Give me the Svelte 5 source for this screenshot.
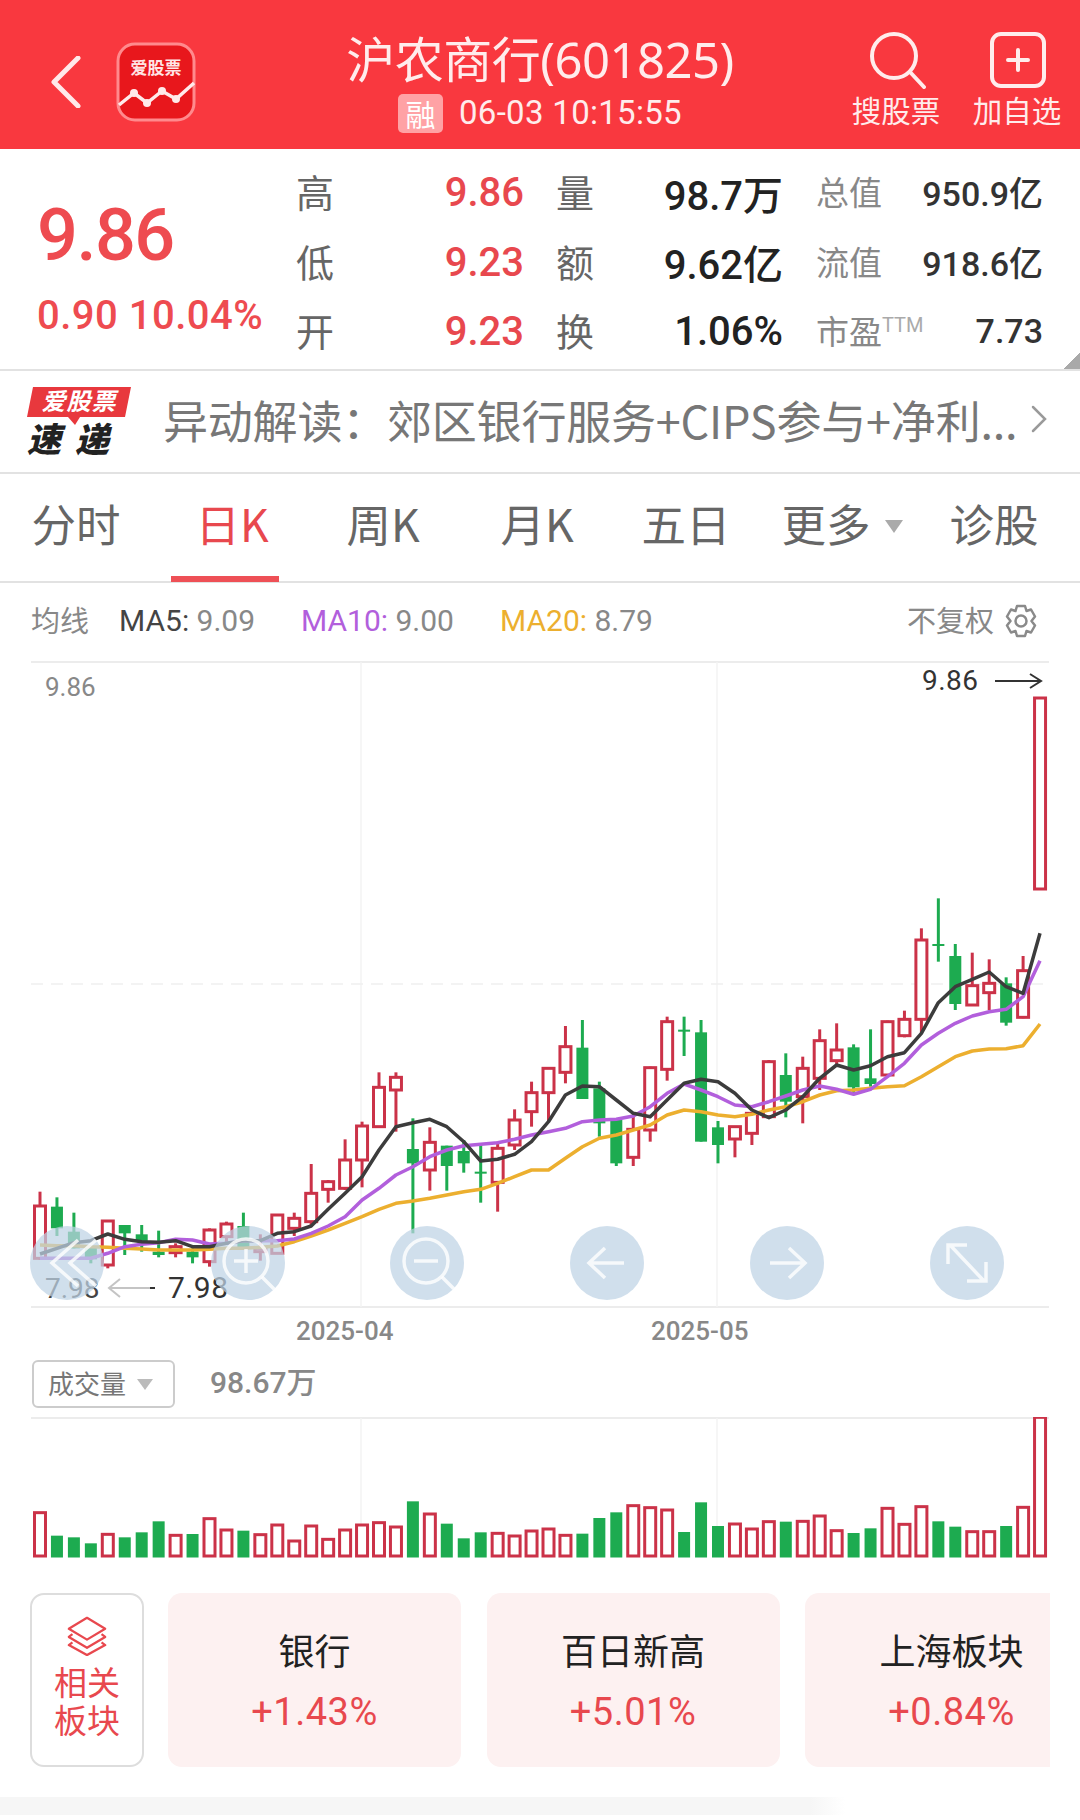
<script>
  const X = (i) => 40 + 16.95 * i;
  const a = (v) => 1000 + v / 3;
  const b = (v) => 880 + v / 3;
  // type, high, top, bottom, low (crop units)
  const c1 = [
    ['r',575,618,775,780],['g',592,620,685,708],['g',638,695,745,745],['g',735,740,778,790],['r',663,663,795,805],
    ['g',675,675,700,765],['g',675,703,725,755],['g',692,755,765,772],['r',730,740,758,772],['g',745,755,772,790],
    ['r',685,690,785,800],['r',665,672,710,730],['g',638,678,745,750],['r',703,745,755,782],['r',645,645,760,762],
    ['r',638,655,685,708],['r',492,580,665,675],['r',540,545,568,608],['r',418,480,565,570],['r',365,378,480,562],
    ['r',217,262,380,380],['r',217,232,270,395],['g',355,447,490,700],['r',382,427,510,572],['g',437,437,498,572],
    ['g',420,453,490,518],['g',430,515,520,608],['r',425,445,547,635],['r',328,360,435,450],['r',245,278,335,380]
  ];
  const c2 = [
    ['r',565,565,638,725],['r',438,500,577,610],['g',420,503,657,657],['g',605,625,730,770],['g',720,720,850,858],
    ['r',705,748,832,858],['r',560,563,750,785],['r',410,425,568,602],['g',410,449,453,528],['g',420,457,785,785],
    ['g',723,742,795,850],['r',738,740,777,832],['r',700,700,760,795],['r',540,545,710,712],['g',520,585,665,712],
    ['r',530,565,650,730],['r',448,482,595,630],['r',430,510,542,555],['g',493,502,622,645],['g',448,595,612,620],
    ['r',422,425,585,590],['r',392,418,467,472],['r',145,180,418,460],['g',55,192,198,245],['g',192,228,372,390],
    ['r',218,317,375,378],['r',238,310,338,390],['g',292,310,428,437],['r',228,272,412,415],['r',0,-573,27,27]
  ];
  const candles = [
    ...c1.map((d, i) => ({ i, up: d[0] === 'r', hi: a(d[1]), top: a(d[2]), bot: a(d[3]), lo: a(d[4]) })),
    ...c2.map((d, i) => ({ i: i + 30, up: d[0] === 'r', hi: b(d[1]), top: b(d[2]), bot: b(d[3]), lo: b(d[4]) }))
  ];
  candles[59].hi = 698; candles[59].top = 698;

  const line = (p1, p2) =>
    [...p1.map((v, i) => `${X(i).toFixed(1)},${a(v).toFixed(1)}`), ...p2.map((v, i) => `${X(i + 30).toFixed(1)},${b(v).toFixed(1)}`)].join(' ');

  const ma5 = line(
    [762,745,728,722,702,718,725,727,722,740,740,730,722,722,700,695,678,628,580,530,450,380,368,358,380,425,483,478,463,425],
    [725,645,618,620,660,700,710,660,610,598,605,640,690,713,690,650,595,555,570,557,530,518,460,368,320,298,276,320,340,160]
  );
  const ma10 = line(
    [775,775,775,775,760,740,733,728,718,720,732,730,722,722,722,717,700,678,650,600,565,525,500,470,450,437,433,428,418,405],
    [755,745,725,720,718,708,680,640,612,630,650,675,680,665,648,630,618,628,643,628,590,550,495,460,430,408,395,388,350,242]
  );
  const ma20 = line(
    [735,737,737,740,742,745,747,750,750,750,748,745,745,742,738,725,708,690,670,650,628,610,603,595,585,575,568,550,530,510],
    [870,835,800,775,765,750,735,705,690,695,705,710,703,690,680,665,645,632,630,625,620,617,590,560,530,513,507,506,497,432]
  );

  const vol = 'r518 g587 g592 g610 r583 g592 g577 g544 r586 g582 r536 r570 g572 r584 r555 r603 r558 r598 r570 r555 r548 r561 g484 r522 g551 g595 g577 r580 r588 r573 r567 r586 g581 g534 g517 r497 r503 r510 g576 g487 g558 r552 r567 r545 g545 r544 r528 r572 g579 g565 r505 r553 r500 g544 g560 r575 r575 g558 r502 r232'
    .split(' ')
    .map((s, i) => ({ i, up: s[0] === 'r', top: 1340 + Number(s.slice(1)) / 3 }));

  const rows = [
    { k1: '高', v1: '9.86', k2: '量', v2: '98.7万', k3: '总值', v3: '950.9亿' },
    { k1: '低', v1: '9.23', k2: '额', v2: '9.62亿', k3: '流值', v3: '918.6亿' },
    { k1: '开', v1: '9.23', k2: '换', v2: '1.06%', k3: '市盈', ttm: true, v3: '7.73' }
  ];
  const tabs = [
    { t: '分时', x: 76 }, { t: '日K', x: 232, on: true }, { t: '周K', x: 383 },
    { t: '月K', x: 537 }, { t: '五日', x: 686 }
  ];
  const cards = [
    { n: '银行', v: '+1.43%' }, { n: '百日新高', v: '+5.01%' }, { n: '上海板块', v: '+0.84%' }
  ];
</script>

<div class="page">
  <header class="top">
    <div class="top-left">
      <svg class="back" width="30" height="52" viewBox="0 0 30 52"><path d="M27 2 3 26l24 24" /></svg>
      <svg class="logo" width="80" height="80" viewBox="0 0 80 80">
        <rect x="2" y="2" width="76" height="76" rx="17" class="logo-bg" />
        <text x="40" y="32" class="logo-text">爱股票</text>
        <polyline points="3,63 18,51 31,61 46,49 60,57 78,41" class="logo-line" />
        <circle cx="18" cy="51" r="4" class="logo-dot" /><circle cx="31" cy="61" r="4" class="logo-dot" />
        <circle cx="46" cy="49" r="4" class="logo-dot" /><circle cx="60" cy="57" r="4" class="logo-dot" />
      </svg>
    </div>
    <div class="top-mid">
      <div class="title">沪农商行(601825)</div>
      <div class="sub"><span class="rong">融</span><span class="time">06-03 10:15:55</span></div>
    </div>
    <div class="top-right">
      <div class="act">
        <svg width="60" height="58" viewBox="0 0 60 58"><circle cx="28" cy="25" r="22" /><path d="m44 41 14 15" /></svg>
        <span>搜股票</span>
      </div>
      <div class="act">
        <svg width="60" height="58" viewBox="0 0 60 58"><rect x="5" y="3" width="52" height="52" rx="9" /><path d="M31 19v20M21 29h20" /></svg>
        <span>加自选</span>
      </div>
    </div>
  </header>

  <section class="stats">
    <div class="price">
      <div class="big">9.86</div>
      <div class="chg">0.90 10.04%</div>
    </div>
    <div class="grid">
      {#each rows as r}
        <span class="k">{r.k1}</span>
        <span class="v red">{r.v1}</span>
        <span class="k k2">{r.k2}</span>
        <span class="v dark">{r.v2}</span>
        <span class="k3">{r.k3}{#if r.ttm}<sup>TTM</sup>{/if}</span>
        <span class="v3">{r.v3}</span>
      {/each}
    </div>
    <i class="corner"></i>
  </section>

  <section class="news">
    <svg class="news-logo" width="104" height="74" viewBox="0 0 104 74">
      <polygon points="6,0 104,0 98,30 53,30 48,38 41,30 0,30" class="nl-bg" />
      <text x="52" y="23" class="nl-top">爱股票</text>
      <text x="48" y="65" class="nl-bot">速递</text>
    </svg>
    <div class="news-text">异动解读：郊区银行服务+CIPS参与+净利...</div>
    <svg class="news-arrow" width="16" height="30" viewBox="0 0 16 30"><path d="m2 3 12 12L2 27" /></svg>
  </section>

  <nav class="tabs">
    {#each tabs as t}
      <span class="tab" class:on={t.on} style="left:{t.x}px">{t.t}</span>
    {/each}
    <span class="tab" style="left:826px">更多</span>
    <i class="tab-tri"></i>
    <span class="tab" style="left:994px">诊股</span>
    <i class="tab-line"></i>
  </nav>

  <section class="ma">
    <span class="ma-k">均线</span>
    <span class="ma-i i1"><b class="c5">MA5:</b> 9.09</span>
    <span class="ma-i i2"><b class="c10">MA10:</b> 9.00</span>
    <span class="ma-i i3"><b class="c20">MA20:</b> 8.79</span>
    <span class="ma-r">不复权</span>
    <svg class="gear" width="34" height="34" viewBox="0 0 34 34">
      <path d="M13 2h8l1.500 5 4.500-1.500 4 7-3.500 4.500 3.500 4.500-4 7-4.500-1.500L21 32h-8l-1.500-5L7 28.500l-4-7L6.500 17 3 12.500l4-7L11.500 7z" />
      <circle cx="17" cy="17" r="5.500" />
    </svg>
  </section>

  <svg class="chart" width="1080" height="689" viewBox="0 661 1080 689">
    <line x1="31" x2="1049" y1="662" y2="662" class="grid-l" />
    <line x1="31" x2="1049" y1="1307" y2="1307" class="grid-l" />
    <line x1="361" x2="361" y1="662" y2="1307" class="grid-v" />
    <line x1="717" x2="717" y1="662" y2="1307" class="grid-v" />
    <line x1="31" x2="1049" y1="984" y2="984" class="grid-d" />

    <text x="45" y="696" class="t-grey">9.86</text>
    <text x="922" y="690" class="t-dark">9.86</text>
    <path d="M995 681h46m-11-7 11 7-11 7" class="arrow-l" />
    <text x="45" y="1298" class="t-low">7.98</text>
    <path d="M155 1288h-46m11-9-11 9 11 9" class="arrow-g" /><path d="M150 1288h5" class="arrow-l" />
    <text x="168" y="1298" class="t-dark lo">7.98</text>

    {#each candles as c}
      {#if c.up}
        <line x1={X(c.i)} x2={X(c.i)} y1={c.hi} y2={c.top} class="wick up" />
        <line x1={X(c.i)} x2={X(c.i)} y1={c.bot} y2={c.lo} class="wick up" />
        <rect x={X(c.i) - 5.5} y={c.top} width="11" height={Math.max(c.bot - c.top, 2)} class="body up" />
      {:else}
        <line x1={X(c.i)} x2={X(c.i)} y1={c.hi} y2={c.lo} class="wick down" />
        <rect x={X(c.i) - 6} y={c.top} width="12" height={Math.max(c.bot - c.top, 2)} class="solid" />
      {/if}
    {/each}

    <polyline points={ma20} class="ln l20" />
    <polyline points={ma10} class="ln l10" />
    <polyline points={ma5} class="ln l5" />

    <text x="296" y="1340" class="t-date">2025-04</text>
    <text x="651" y="1340" class="t-date">2025-05</text>

    <g class="btn">
      <circle cx="67" cy="1263" r="37" />
      <path d="M78 1240 52 1263l26 23M96 1240l-26 23 26 23" class="ic" />
    </g>
    <g class="btn">
      <circle cx="248" cy="1263" r="37" />
      <circle cx="246" cy="1261" r="22" class="ic" /><path d="m262 1277 13 13M234 1261h24M246 1249v24" class="ic" />
    </g>
    <g class="btn">
      <circle cx="427" cy="1263" r="37" />
      <circle cx="426" cy="1261" r="22" class="ic" /><path d="m442 1277 13 13M414 1261h24" class="ic" />
    </g>
    <g class="btn">
      <circle cx="607" cy="1263" r="37" />
      <path d="M624 1263h-34m15-15-16 15 16 15" class="ic" />
    </g>
    <g class="btn">
      <circle cx="787" cy="1263" r="37" />
      <path d="M770 1263h34m-15-15 16 15-16 15" class="ic" />
    </g>
    <g class="btn">
      <circle cx="967" cy="1263" r="37" />
      <path d="m950 1245 34 36M948 1264v-19h19M986 1262v19h-19" class="ic" />
    </g>
  </svg>

  <section class="vol-head">
    <div class="vol-sel">成交量<i></i></div>
    <span class="vol-num">98.67万</span>
  </section>

  <svg class="vol" width="1080" height="143" viewBox="0 1417 1080 143">
    <line x1="31" x2="1049" y1="1418" y2="1418" class="grid-l" />
    <line x1="361" x2="361" y1="1418" y2="1557" class="grid-v" />
    <line x1="717" x2="717" y1="1418" y2="1557" class="grid-v" />
    {#each vol as v}
      {#if v.up}
        <rect x={X(v.i) - 5.5} y={v.top} width="11" height={1556 - v.top} class="body up" />
      {:else}
        <rect x={X(v.i) - 6} y={v.top} width="12" height={1557.500 - v.top} class="solid" />
      {/if}
    {/each}
  </svg>

  <section class="cards">
    <div class="rel">
      <svg width="42" height="40" viewBox="0 0 46 44">
        <path d="M23 2 43 14 23 26 3 14z" /><path d="M7 20 3 23l20 12 20-12-4-3" /><path d="M7 29l-4 3 20 11 20-11-4-3" />
      </svg>
      <span>相关</span><span>板块</span>
    </div>
    <div class="card-row">
      {#each cards as c}
        <div class="card">
          <div class="c-n">{c.n}</div>
          <div class="c-v">{c.v}</div>
        </div>
      {/each}
    </div>
  </section>

  <div class="foot"></div>
</div>

<style>
  :global(body) { margin: 0; background: #fff; }
  .page {
    position: relative;
    width: 1080px;
    height: 1820px;
    overflow: hidden;
    background: #fff;
    font-family: Roboto, "Noto Sans CJK SC", sans-serif;
  }

  .top {
    height: 149px;
    box-sizing: border-box;
    background: #f9383f;
    display: grid;
    grid-template-columns: 1fr auto 1fr;
    color: #fff;
  }
  .top-left { display: flex; align-items: center; padding: 14px 0 0 51px; gap: 35px; }
  .back path { fill: none; stroke: #ffe9ea; stroke-width: 5; stroke-linecap: round; stroke-linejoin: round; }
  .logo-bg { fill: #e8171c; stroke: #ff8a8d; stroke-width: 3; }
  .logo-text { fill: #ffe5e5; font: 700 17px "Noto Sans CJK SC", sans-serif; text-anchor: middle; }
  .logo-line { fill: none; stroke: #ffeaea; stroke-width: 3.500; }
  .logo-dot { fill: #ffeaea; }
  .top-mid { display: flex; flex-direction: column; align-items: center; }
  .title { font: 400 49px/60px "Noto Sans", "Noto Sans CJK SC", sans-serif; margin-top: 29px; color: #ffecec; letter-spacing: -0.500px; white-space: nowrap; }
  .sub { display: flex; align-items: center; margin-top: 4px; gap: 16px; margin-left: 0; }
  .rong {
    width: 45px; height: 39px; border-radius: 5px; background: #ffa2a5;
    display: flex; align-items: center; justify-content: center;
    font: 400 30px "Noto Sans CJK SC", sans-serif; color: #fff;
  }
  .time { font: 400 33px/40px Roboto, sans-serif; color: #ffecec; letter-spacing: 0.300px; }
  .top-right { display: flex; justify-content: flex-end; padding: 31px 19px 0 0; gap: 33px; }
  .act { display: flex; flex-direction: column; align-items: center; width: 88px; }
  .act svg { fill: none; stroke: #ffecec; stroke-width: 4; stroke-linecap: round; }
  .act span { font: 400 29.500px/36px "Noto Sans CJK SC", sans-serif; color: #ffecec; white-space: nowrap; margin-top: 2px; }

  .stats {
    position: relative;
    border-bottom: 2px solid #e2e2e2;
    display: flex;
    height: 220px;
  }
  .price { width: 296px; box-sizing: border-box; padding: 47px 0 0 37px; color: #ee4b50; }
  .big { font: 500 72px/80px Roboto, sans-serif; letter-spacing: -1.500px; }
  .chg { font: 500 40px/48px Roboto, sans-serif; margin-top: 16px; letter-spacing: 0.500px; white-space: nowrap; }
  .grid {
    display: grid;
    grid-template-columns: 59px 169px 92px 167px 113px 147px;
    grid-auto-rows: 69.500px;
    align-items: center;
    padding-top: 9px;
  }
  .k { font: 400 38px "Noto Sans CJK SC", sans-serif; color: #666; margin-top: -4px; }
  .k2 { padding-left: 32px; }
  .v { font: 500 40px Roboto, "Noto Sans CJK SC", sans-serif; text-align: right; }
  .red { color: #e8484e; }
  .dark { color: #222; }
  .k3 { font: 400 33px "Noto Sans CJK SC", sans-serif; color: #888; padding-left: 33px; white-space: nowrap; margin-top: -3px; }
  .k3 sup { font-size: 20px; line-height: 0; font-family: Roboto, sans-serif; color: #aaa; }
  .v3 { font: 500 34px Roboto, "Noto Sans CJK SC", sans-serif; color: #333; text-align: right; margin-top: -2px; }
  .corner {
    position: absolute; right: 0; bottom: 0; width: 17px; height: 17px;
    background: linear-gradient(135deg, transparent 50%, #a9a9a9 50%);
  }

  .news { height: 101px; border-bottom: 2px solid #e2e2e2; display: flex; align-items: center; position: relative; }
  .news-logo { margin: 4px 0 0 27px; flex: none; }
  .nl-bg { fill: #e8383d; }
  .nl-top { fill: #fff; font: italic 700 24px/1 "Noto Sans CJK SC", sans-serif; text-anchor: middle; letter-spacing: 1px; }
  .nl-bot { fill: #222; font: italic 900 34px/1 "Noto Sans CJK SC", sans-serif; text-anchor: middle; letter-spacing: 14px; }
  .news-text { font: 400 45px "Noto Sans CJK SC", sans-serif; color: #777; margin: -5px 0 0 32px; white-space: nowrap; letter-spacing: -0.200px; }
  .news-arrow { position: absolute; left: 1031px; top: 33px; }
  .news-arrow path { fill: none; stroke: #9a9a9a; stroke-width: 2.500; stroke-linecap: round; }

  .tabs { position: relative; height: 107px; border-bottom: 2px solid #e2e2e2; }
  .tab {
    position: absolute; top: 18px; transform: translateX(-50%);
    font: 400 44.500px/62px "Noto Sans CJK SC", sans-serif; color: #666; white-space: nowrap;
  }
  .tab.on { color: #e8484e; }
  .tab-tri {
    position: absolute; left: 885px; top: 46px; width: 0; height: 0;
    border-left: 9px solid transparent; border-right: 9px solid transparent; border-top: 13px solid #aaa;
  }
  .tab-line { position: absolute; left: 171px; bottom: -1px; width: 108px; height: 6px; background: #ee5056; }

  .ma { position: relative; height: 78px; font-size: 30px; color: #888; }
  .ma > * { position: absolute; top: 19px; line-height: 38px; white-space: nowrap; }
  .ma-k { left: 31px; font-size: 29px; font-family: "Noto Sans CJK SC", sans-serif; top: 17px; }
  .i1 { left: 119px; } .i2 { left: 301px; } .i3 { left: 500px; }
  .ma-i b { font-weight: 400; }
  .c5 { color: #444; } .c10 { color: #b25fdc; } .c20 { color: #ecaf2f; }
  .ma-r { left: 907px; font-size: 29px; font-family: "Noto Sans CJK SC", sans-serif; top: 17px; }
  .gear { left: 1004px; top: 21px; fill: none; stroke: #8a8a8a; stroke-width: 2.500; stroke-linejoin: round; }

  .chart, .vol { display: block; }
  .grid-l { stroke: #ececec; stroke-width: 2; }
  .grid-v { stroke: #f3f3f3; stroke-width: 1.500; }
  .grid-d { stroke: #f0f0f0; stroke-width: 1.500; stroke-dasharray: 12 8; }
  .t-grey { font: 400 26px Roboto, sans-serif; fill: #888; }
  .t-low { font: 400 28px Roboto, sans-serif; fill: #444; }
  .t-dark { font: 400 28px Roboto, sans-serif; fill: #333; letter-spacing: 0.500px; }
  .t-dark.lo { font-size: 30px; }
  .t-date { font: 500 26px Roboto, sans-serif; fill: #888; }
  .arrow-l { fill: none; stroke: #333; stroke-width: 2; }
  .arrow-g { fill: none; stroke: #c4c4c4; stroke-width: 2; }
  .wick { stroke-width: 3; }
  .wick.up { stroke: #cb3248; }
  .wick.down { stroke: #1dab50; }
  .body { fill: #fff; stroke-width: 3; }
  .body.up { stroke: #cb3248; }
  .solid { fill: #1dab50; }
  .ln { fill: none; stroke-width: 3.500; stroke-linejoin: round; }
  .l5 { stroke: #3c3c3c; } .l10 { stroke: #b25fdc; } .l20 { stroke: #ecaf2f; }
  .btn > circle:first-child { fill: #bed2e4; fill-opacity: 0.72; stroke: none; }
  .ic { fill: none; stroke: #fff; stroke-opacity: 0.8; stroke-width: 3.500; }

  .vol-head { height: 67px; position: relative; }
  .vol-sel {
    position: absolute; left: 32px; top: 10px; width: 143px; height: 48px; box-sizing: border-box;
    border: 2px solid #ccc; border-radius: 6px;
    font: 400 26px/41px "Noto Sans CJK SC", sans-serif; color: #777; padding-left: 14px;
  }
  .vol-sel i {
    position: absolute; left: 103px; top: 17px; width: 0; height: 0;
    border-left: 8px solid transparent; border-right: 8px solid transparent; border-top: 11px solid #bbb;
  }
  .vol-num { position: absolute; left: 210px; top: 13px; font: 500 30px/40px Roboto, "Noto Sans CJK SC", sans-serif; color: #888; }

  .cards { display: flex; margin: 33px 30px 0 30px; height: 174px; gap: 24px; }
  .rel {
    flex: none; width: 114px; box-sizing: border-box; border: 2px solid #ddd; border-radius: 14px;
    display: flex; flex-direction: column; align-items: center; padding-top: 21px; color: #e8484e;
    font: 400 33px/38px "Noto Sans CJK SC", sans-serif;
  }
  .rel svg { fill: none; stroke: #e8484e; stroke-width: 2.500; stroke-linejoin: round; margin-bottom: 6px; }
  .card-row { display: flex; gap: 25.500px; overflow: hidden; flex: 1; }
  .card {
    flex: none; width: 293px; border-radius: 14px; background: #fdf1f1; text-align: center;
    padding-top: 33px; box-sizing: border-box;
  }
  .c-n { font: 400 36px/46px "Noto Sans CJK SC", sans-serif; color: #222; }
  .c-v { font: 400 38px/46px Roboto, sans-serif; color: #e8484e; margin-top: 17px; letter-spacing: 0.500px; }

  .foot {
    position: absolute; left: 0; top: 1797px; width: 1080px; height: 18px;
    background: linear-gradient(90deg, #f6f6f6 0 810px, #fff 845px);
  }
</style>
